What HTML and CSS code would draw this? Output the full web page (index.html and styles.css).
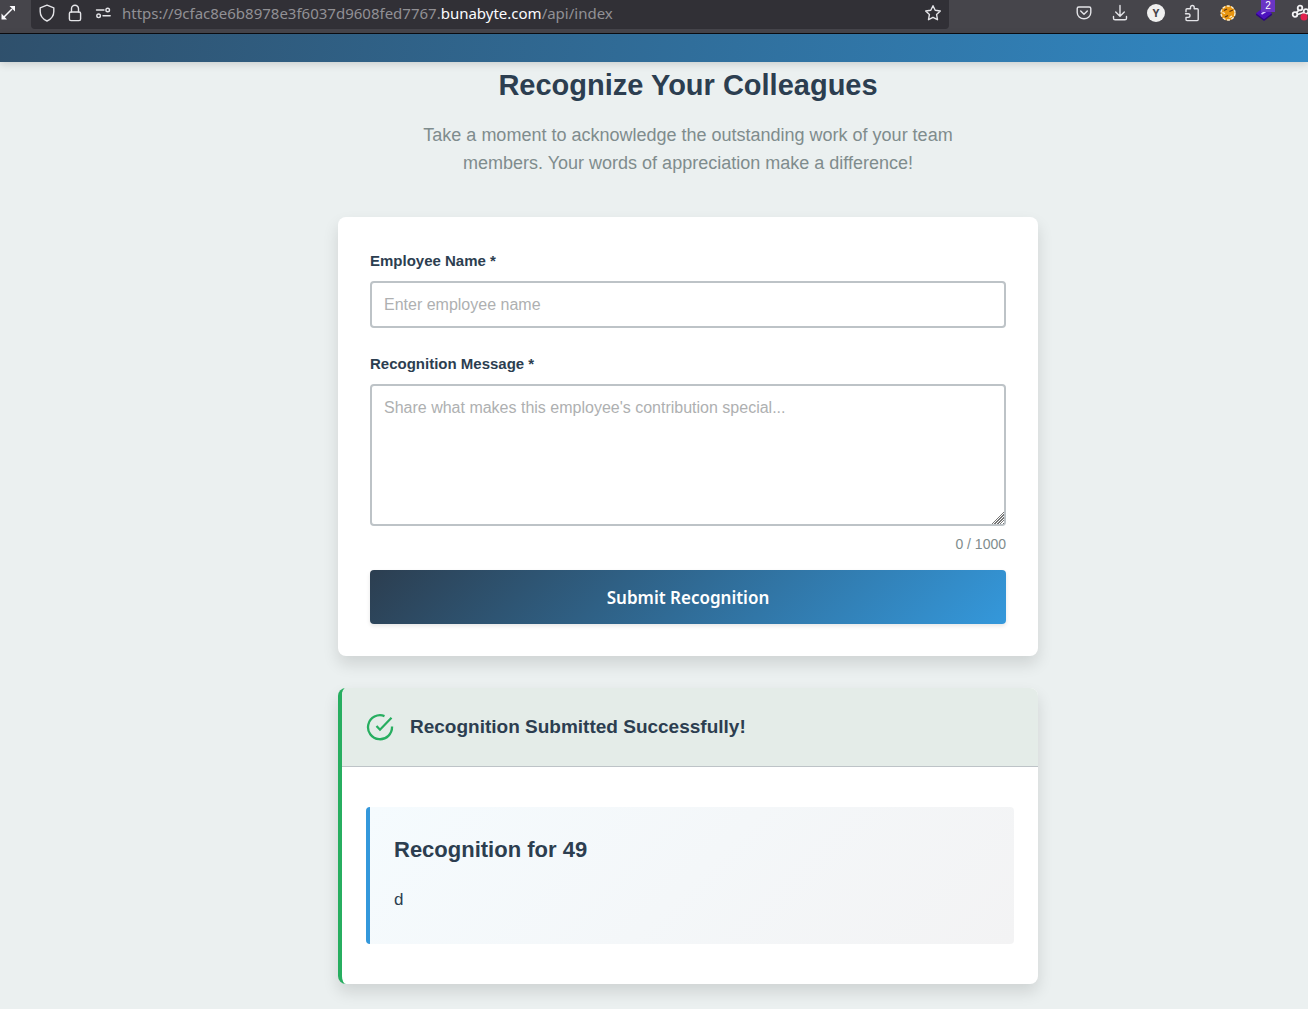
FILE: index.html
```html
<!DOCTYPE html>
<html lang="en">
<head>
<meta charset="utf-8">
<meta name="viewport" content="width=device-width, initial-scale=1">
<title>Recognize Your Colleagues</title>
<link rel="stylesheet" href="styles.css">
</head>
<body>
<div class="toolbar">
  <button class="tool resize" type="button" aria-label="Resize">
    <svg viewBox="0 0 18 18"><path d="M4 13 12 5" stroke="#fbfbfe" stroke-width="1.6"/><path d="M9.500 2H15v5.500zM1.500 9.500V15.500h5.500z" fill="#fbfbfe"/></svg>
  </button>
  <div class="urlbar">
    <button class="tool" type="button" aria-label="Tracking protection">
      <svg viewBox="0 0 18 18"><path d="M9 1.200 15.800 3.800V7.500C15.800 12 13 15.200 9 17 5 15.200 2.200 12 2.200 7.500V3.800z" class="line"/></svg>
    </button>
    <button class="tool" type="button" aria-label="Connection secure">
      <svg viewBox="0 0 18 18"><rect x="3.400" y="8" width="11.200" height="8.600" rx="1.600" class="line"/><path d="M5.500 8V4.800a3.500 3.500 0 0 1 7 0V8" class="line"/></svg>
    </button>
    <button class="tool" type="button" aria-label="Permissions">
      <svg viewBox="0 0 18 18"><path d="M2.500 6H10M9 11.800h7.200" class="line"/><circle cx="13.700" cy="6" r="1.800" class="line"/><circle cx="4.600" cy="11.800" r="1.800" class="line"/></svg>
    </button>
    <div class="url" role="textbox" aria-label="Address">https://9cfac8e6b8978e3f6037d9608fed7767.<span class="domain">bunabyte.com</span>/api/index</div>
    <button class="tool" type="button" aria-label="Bookmark">
      <svg viewBox="0 0 18 18"><path d="M9 1.700 11.200 6.300 16.300 7 12.600 10.600 13.500 15.700 9 13.300 4.500 15.700 5.400 10.600 1.700 7 6.800 6.300z" class="line"/></svg>
    </button>
  </div>
  <div class="extensions">
    <button class="tool" type="button" aria-label="Pocket">
      <svg viewBox="0 0 18 18"><path d="M3.800 3h10.400a1.600 1.600 0 0 1 1.600 1.600v3.900a6.800 6.300 0 0 1-13.600 0V4.600A1.600 1.600 0 0 1 3.800 3z" class="line"/><path d="M5.700 7 9 10.200 12.300 7" class="line"/></svg>
    </button>
    <button class="tool" type="button" aria-label="Downloads">
      <svg viewBox="0 0 18 18"><path d="M9 1.500V12M4.700 8 9 12.200 13.300 8M2.500 12.500v1.700a1.600 1.600 0 0 0 1.600 1.600h9.800a1.600 1.600 0 0 0 1.600-1.600v-1.700" class="line"/></svg>
    </button>
    <button class="tool avatar" type="button" aria-label="Account">Y</button>
    <button class="tool" type="button" aria-label="Extensions">
      <svg viewBox="0 0 18 18"><path d="M3 7.700V5.800a1 1 0 0 1 1-1h3.500V3.300a1.800 1.800 0 0 1 3.700 0v1.500h3a1 1 0 0 1 1 1v9.800a1 1 0 0 1-1 1H4a1 1 0 0 1-1-1v-2.200h2.200a1.700 1.700 0 0 0 0-3.600H2.500" class="line"/></svg>
    </button>
    <button class="tool" type="button" aria-label="Cookie extension">
      <svg viewBox="0 0 18 18"><circle cx="9" cy="9" r="7.400" fill="#e8950f"/><circle cx="9" cy="9" r="7" fill="none" stroke="#f7ecd2" stroke-width="1.400" stroke-dasharray="3 1.500"/><path d="M5 6.500 8 5M10.500 7.500 14 6M6 13 9 11.500" fill="none" stroke="#5c3310" stroke-width="1.300"/><path d="M3.500 8.500 6 9.500M10.500 13.500 13 12" stroke="#fff0ca" stroke-width="1.300"/></svg>
    </button>
    <button class="tool" type="button" aria-label="Layered extension, 2 notices">
      <svg viewBox="0 0 18 18"><path d="M1 9.200V11l8 6 8-6V9.200z" fill="#2d0581"/><path d="m9 3 8 6.200-8 6-8-6z" fill="#4c12bd"/><path d="m6.500 10 4-2.500" stroke="#d9c8ff" stroke-width="1.600"/></svg>
      <span class="badge">2</span>
    </button>
    <button class="tool" type="button" aria-label="Molecule extension">
      <svg viewBox="0 0 18 18"><g fill="none" stroke="#f4f4f6" stroke-width="1.800"><circle cx="9" cy="4" r="2.300"/><circle cx="4" cy="10.500" r="2.300"/><circle cx="15" cy="7.500" r="2.300"/><path d="M8 6 5.500 8.700M6.300 10.500 12.800 8.500"/></g><circle cx="13" cy="13" r="3.500" fill="#e3234f"/></svg>
    </button>
  </div>
</div>

<header class="site-header"></header>

<main class="page">
  <section class="intro">
    <h1 class="intro-title">Recognize Your Colleagues</h1>
    <p class="intro-text">Take a moment to acknowledge the outstanding work of your team members. Your words of appreciation make a difference!</p>
  </section>

  <form class="card form-card">
    <div class="field">
      <label class="label" for="employee">Employee Name *</label>
      <input class="control" id="employee" type="text" placeholder="Enter employee name">
    </div>
    <div class="field">
      <label class="label" for="message">Recognition Message *</label>
      <textarea class="control message" id="message" maxlength="1000" placeholder="Share what makes this employee's contribution special..."></textarea>
    </div>
    <div class="counter">0 / 1000</div>
    <button class="submit" type="submit">Submit Recognition</button>
  </form>

  <section class="card result">
    <div class="result-head">
      <svg class="result-icon" viewBox="0 0 28 28" aria-hidden="true"><path d="M18.500 3.100A12 12 0 1 0 26 13.500" /><path d="M10.500 13 14 16.700 25.500 4.800"/></svg>
      <h2 class="result-title">Recognition Submitted Successfully!</h2>
    </div>
    <div class="result-body">
      <article class="quote">
        <h3 class="quote-title">Recognition for 49</h3>
        <p class="quote-text">d</p>
      </article>
    </div>
  </section>
</main>
</body>
</html>
```
FILE: styles.css
```css
* { box-sizing: border-box; }

body {
  margin: 0;
  min-height: 100vh;
  overflow-x: hidden;
  background: #ebf0f0;
  color: #2c3e50;
  font-family: "Liberation Sans", Arial, sans-serif;
  font-size: 16px;
  line-height: 26px;
}

h1, h2, h3, p { margin: 0; }

/* Browser toolbar */
.toolbar {
  display: flex;
  height: 34px;
  overflow: hidden;
  background: #46454b;
  border-bottom: 1px solid #0c0c10;
}

.tool {
  position: relative;
  flex: none;
  width: 18px;
  height: 18px;
  padding: 0;
  border: 0;
  background: none;
}

.tool svg { display: block; width: 18px; height: 18px; }

.line {
  fill: none;
  stroke: #e4e4e8;
  stroke-width: 1.4;
  stroke-linejoin: round;
  stroke-linecap: round;
}

.resize { margin: 4px 13px 0 0; }

.urlbar {
  flex: 1;
  display: flex;
  align-items: center;
  gap: 10px;
  min-width: 0;
  height: 29px;
  padding: 0 7px 3px;
  border-radius: 0 0 4px 4px;
  background: #313036;
}

.url {
  flex: 1;
  min-width: 0;
  overflow: hidden;
  white-space: nowrap;
  color: #919095;
  font: 15px/24px "Noto Sans", sans-serif;
}

.domain { color: #fbfbfe; }

.extensions {
  flex: none;
  display: flex;
  gap: 18px;
  padding: 4px 0 0 126px;
  margin-right: -1px;
}

.avatar {
  border-radius: 50%;
  background: #f0f0f0;
  color: #46454b;
  font: bold 11px/18px "Noto Sans", sans-serif;
}

.badge {
  position: absolute;
  top: -4px;
  left: 6px;
  width: 14px;
  height: 12px;
  background: #6a35c4;
  color: #fff;
  font: 10px/12px "Liberation Sans", Arial, sans-serif;
}

/* Page */
.site-header {
  position: relative;
  height: 28px;
  background: linear-gradient(100deg, #2f506c, #3189c5);
  box-shadow: 0 2px 8px rgba(0, 0, 0, 0.15);
}

.page {
  display: flex;
  flex-direction: column;
  gap: 32px;
  max-width: 768px;
  margin: 0 auto;
  padding: 0 0 25px 68px;
}

.intro {
  padding-bottom: 8px;
  text-align: center;
}

.intro-title {
  margin-bottom: 13px;
  font-size: 29px;
  line-height: 46px;
}

.intro-text {
  max-width: 600px;
  margin: 0 auto;
  padding: 0 32px;
  color: #7f8c8d;
  font-size: 18px;
  line-height: 28px;
}

.card {
  border-radius: 8px;
  background: #fff;
  box-shadow: 0 8px 16px rgba(0, 0, 0, 0.12);
}

.form-card {
  display: flex;
  flex-direction: column;
  padding: 32px;
}

.field + .field { margin-top: 24px; }

.label {
  display: block;
  margin-bottom: 8px;
  font-size: 15px;
  font-weight: bold;
  line-height: 24px;
}

.control {
  display: block;
  width: 100%;
  height: 47px;
  padding: 12px;
  border: 2px solid #bdc3c7;
  border-radius: 4px;
  background: #fff;
  color: #2c3e50;
  font: 16px/19px "Liberation Sans", Arial, sans-serif;
}

.control::placeholder { color: #aeb0b1; }

.message {
  height: 142px;
  resize: vertical;
}

.message::-webkit-resizer {
  background:
    linear-gradient(135deg, #fff 58%, transparent 58%),
    repeating-linear-gradient(135deg, #777 0 1px, #fff 1px 2px);
}

.counter {
  margin: 8px 0 16px;
  color: #7f8c8d;
  font-size: 14px;
  line-height: 20px;
  text-align: right;
}

.submit {
  padding: 16px 16px 14px;
  border: 0;
  border-radius: 4px;
  background: linear-gradient(135deg, #2c3e50, #3498db);
  box-shadow: 0 2px 4px rgba(0, 0, 0, 0.1);
  color: #fff;
  font: 600 17px/24px "Noto Sans", sans-serif;
}

.result {
  overflow: hidden;
  border-left: 4px solid #27ae60;
}

.result-head {
  display: flex;
  align-items: center;
  gap: 16px;
  padding: 24px;
  border-bottom: 1px solid #bdc3c7;
  background: #e4ece8;
}

.result-icon {
  width: 28px;
  height: 28px;
  fill: none;
  stroke: #27ae60;
  stroke-width: 2.3;
}

.result-title {
  font-size: 19px;
  line-height: 30px;
}

.result-body { padding: 40px 24px; }

.quote {
  padding: 24px 24px 30px;
  border-left: 4px solid #3498db;
  border-radius: 4px;
  background: linear-gradient(135deg, #f5fbfe, #f3f3f4);
}

.quote-title {
  margin-bottom: 16px;
  font-size: 22px;
  line-height: 38px;
}

.quote-text {
  font-size: 17px;
  line-height: 29px;
}
```
